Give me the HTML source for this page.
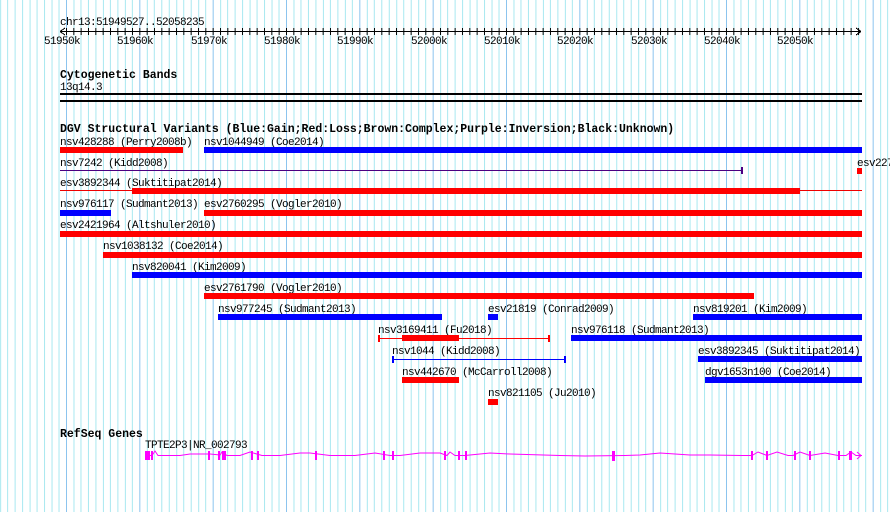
<!DOCTYPE html>
<html><head><meta charset="utf-8"><style>
html,body{margin:0;padding:0;background:#fff;width:890px;height:512px;overflow:hidden}
svg{display:block}
text{font-family:"Liberation Mono",monospace;font-size:11px;letter-spacing:-0.6px;fill:#000}
.b{font-weight:bold;font-size:11.5px;letter-spacing:0}
</style></head><body>
<svg width="890" height="512" xmlns="http://www.w3.org/2000/svg" shape-rendering="crispEdges">
<defs>
<pattern id="g" patternUnits="userSpaceOnUse" x="66" y="0" width="73.333" height="512">
<rect x="0" y="0" width="1" height="512" fill="#8cc4ee"/>
<rect x="7.33" y="0" width="1" height="512" fill="#a8e8f0"/>
<rect x="14.67" y="0" width="1" height="512" fill="#a8e8f0"/>
<rect x="22" y="0" width="1" height="512" fill="#a8e8f0"/>
<rect x="29.33" y="0" width="1" height="512" fill="#a8e8f0"/>
<rect x="36.67" y="0" width="1" height="512" fill="#a8e8f0"/>
<rect x="44" y="0" width="1" height="512" fill="#a8e8f0"/>
<rect x="51.33" y="0" width="1" height="512" fill="#a8e8f0"/>
<rect x="58.67" y="0" width="1" height="512" fill="#a8e8f0"/>
<rect x="66" y="0" width="1" height="512" fill="#a8e8f0"/>
</pattern>
<pattern id="t" patternUnits="userSpaceOnUse" x="66" y="0" width="7.333" height="10">
<rect x="0" y="0" width="1" height="10" fill="#000"/>
</pattern>
</defs>
<rect width="890" height="512" fill="url(#g)"/>
<!-- ruler -->
<text x="60" y="25">chr13:51949527..52058235</text>
<rect x="60" y="31" width="801" height="1" fill="#000"/>
<rect x="60" y="28" width="801" height="7" fill="url(#t)"/>
<path d="M60 31.5 L65 28 M60 31.5 L65 35 M861 31.5 L856 28 M861 31.5 L856 35" stroke="#000" fill="none"/>
<g>
<text x="44" y="44">51950k</text><text x="117" y="44">51960k</text><text x="191" y="44">51970k</text><text x="264" y="44">51980k</text><text x="337" y="44">51990k</text><text x="411" y="44">52000k</text><text x="484" y="44">52010k</text><text x="557" y="44">52020k</text><text x="631" y="44">52030k</text><text x="704" y="44">52040k</text><text x="777" y="44">52050k</text>
</g>
<!-- cytobands -->
<text class="b" x="60" y="78">Cytogenetic Bands</text>
<text x="60" y="90">13q14.3</text>
<rect x="60" y="93" width="802" height="2" fill="#000"/>
<rect x="60" y="100" width="802" height="2" fill="#000"/>
<!-- DGV -->
<text class="b" x="60" y="132">DGV Structural Variants (Blue:Gain;Red:Loss;Brown:Complex;Purple:Inversion;Black:Unknown)</text>
<g>
<text x="60" y="145">nsv428288 (Perry2008b)</text>
<rect x="60" y="147" width="123" height="6" fill="#f00"/>
<text x="204" y="145">nsv1044949 (Coe2014)</text>
<rect x="204" y="147" width="658" height="6" fill="#00f"/>

<text x="60" y="166">nsv7242 (Kidd2008)</text>
<rect x="60" y="170" width="682" height="1" fill="#4b0082"/>
<rect x="741" y="167" width="2" height="7" fill="#4b0082"/>
<text x="857" y="166">esv227</text>
<rect x="857" y="168" width="5" height="6" fill="#f00"/>

<text x="60" y="186">esv3892344 (Suktitipat2014)</text>
<rect x="60" y="190" width="802" height="1" fill="#e00"/>
<rect x="132" y="188" width="668" height="6" fill="#f00"/>

<text x="60" y="207">nsv976117 (Sudmant2013)</text>
<rect x="60" y="210" width="51" height="6" fill="#00f"/>
<text x="204" y="207">esv2760295 (Vogler2010)</text>
<rect x="204" y="210" width="658" height="6" fill="#f00"/>

<text x="60" y="228">esv2421964 (Altshuler2010)</text>
<rect x="60" y="231" width="802" height="6" fill="#f00"/>

<text x="103" y="249">nsv1038132 (Coe2014)</text>
<rect x="103" y="252" width="759" height="6" fill="#f00"/>

<text x="132" y="270">nsv820041 (Kim2009)</text>
<rect x="132" y="272" width="730" height="6" fill="#00f"/>

<text x="204" y="291">esv2761790 (Vogler2010)</text>
<rect x="204" y="293" width="550" height="6" fill="#f00"/>

<text x="218" y="312">nsv977245 (Sudmant2013)</text>
<rect x="218" y="314" width="224" height="6" fill="#00f"/>
<text x="488" y="312">esv21819 (Conrad2009)</text>
<rect x="488" y="314" width="10" height="6" fill="#00f"/>
<text x="693" y="312">nsv819201 (Kim2009)</text>
<rect x="693" y="314" width="169" height="6" fill="#00f"/>

<text x="378" y="333">nsv3169411 (Fu2018)</text>
<rect x="379" y="338" width="170" height="1" fill="#f00"/>
<rect x="378" y="335" width="2" height="7" fill="#f00"/>
<rect x="548" y="335" width="2" height="7" fill="#f00"/>
<rect x="402" y="335" width="57" height="6" fill="#f00"/>
<text x="571" y="333">nsv976118 (Sudmant2013)</text>
<rect x="571" y="335" width="291" height="6" fill="#00f"/>

<text x="392" y="354">nsv1044 (Kidd2008)</text>
<rect x="392" y="359" width="173" height="1" fill="#00f"/>
<rect x="392" y="356" width="2" height="7" fill="#00f"/>
<rect x="564" y="356" width="2" height="7" fill="#00f"/>
<text x="698" y="354">esv3892345 (Suktitipat2014)</text>
<rect x="698" y="356" width="164" height="6" fill="#00f"/>

<text x="402" y="375">nsv442670 (McCarroll2008)</text>
<rect x="402" y="377" width="57" height="6" fill="#f00"/>
<text x="705" y="375">dgv1653n100 (Coe2014)</text>
<rect x="705" y="377" width="157" height="6" fill="#00f"/>

<text x="488" y="396">nsv821105 (Ju2010)</text>
<rect x="488" y="399" width="10" height="6" fill="#f00"/>
</g>
<!-- RefSeq -->
<text class="b" x="60" y="437">RefSeq Genes</text>
<text x="145" y="448">TPTE2P3|NR_002793</text>
<g fill="none" stroke="#f0f" stroke-width="1" shape-rendering="auto">
<polyline points="145,455.5 152,455.5 155,451 158,455.5 180,455.5 190,454 210,454 220,455 222,452 227,455.5 240,455.5 250,452 262,455.5 280,455.5 300,453 310,453 330,455.5 355,455.5 375,453 390,455.5 400,455.5 420,453 440,453 447,455.5 450,452 455,455.5 465,455.5 490,453 510,454 560,455.5 585,456 625,455.5 640,455 660,453 690,455 710,455 742,455.5 752,455.5 758,452 767,455.5 777,452 788,455.5 793,455.5 800,452 810,455.5 825,453 838,455.5 846,455.5 851,452 856,455.5 862,455.5"/>
<path d="M857 452 L861 455.5 L857 459"/>
</g>
<g fill="#f0f">
<rect x="145" y="451" width="5" height="9"/>
<rect x="151" y="451" width="2" height="9"/>
<rect x="208" y="451" width="2" height="9"/>
<rect x="218" y="451" width="2" height="9"/>
<rect x="222" y="451" width="4" height="9"/>
<rect x="251" y="451" width="2" height="9"/>
<rect x="257" y="451" width="2" height="9"/>
<rect x="315" y="451" width="2" height="9"/>
<rect x="383" y="451" width="2" height="9"/>
<rect x="392" y="451" width="2" height="9"/>
<rect x="444" y="451" width="2" height="9"/>
<rect x="458" y="451" width="2" height="9"/>
<rect x="465" y="451" width="2" height="9"/>
<rect x="612" y="451" width="3" height="10"/>
<rect x="751" y="451" width="2" height="9"/>
<rect x="766" y="451" width="2" height="9"/>
<rect x="794" y="451" width="2" height="9"/>
<rect x="809" y="451" width="2" height="9"/>
<rect x="838" y="451" width="2" height="9"/>
<rect x="849" y="451" width="3" height="9"/>
</g>
</svg>
</body></html>
